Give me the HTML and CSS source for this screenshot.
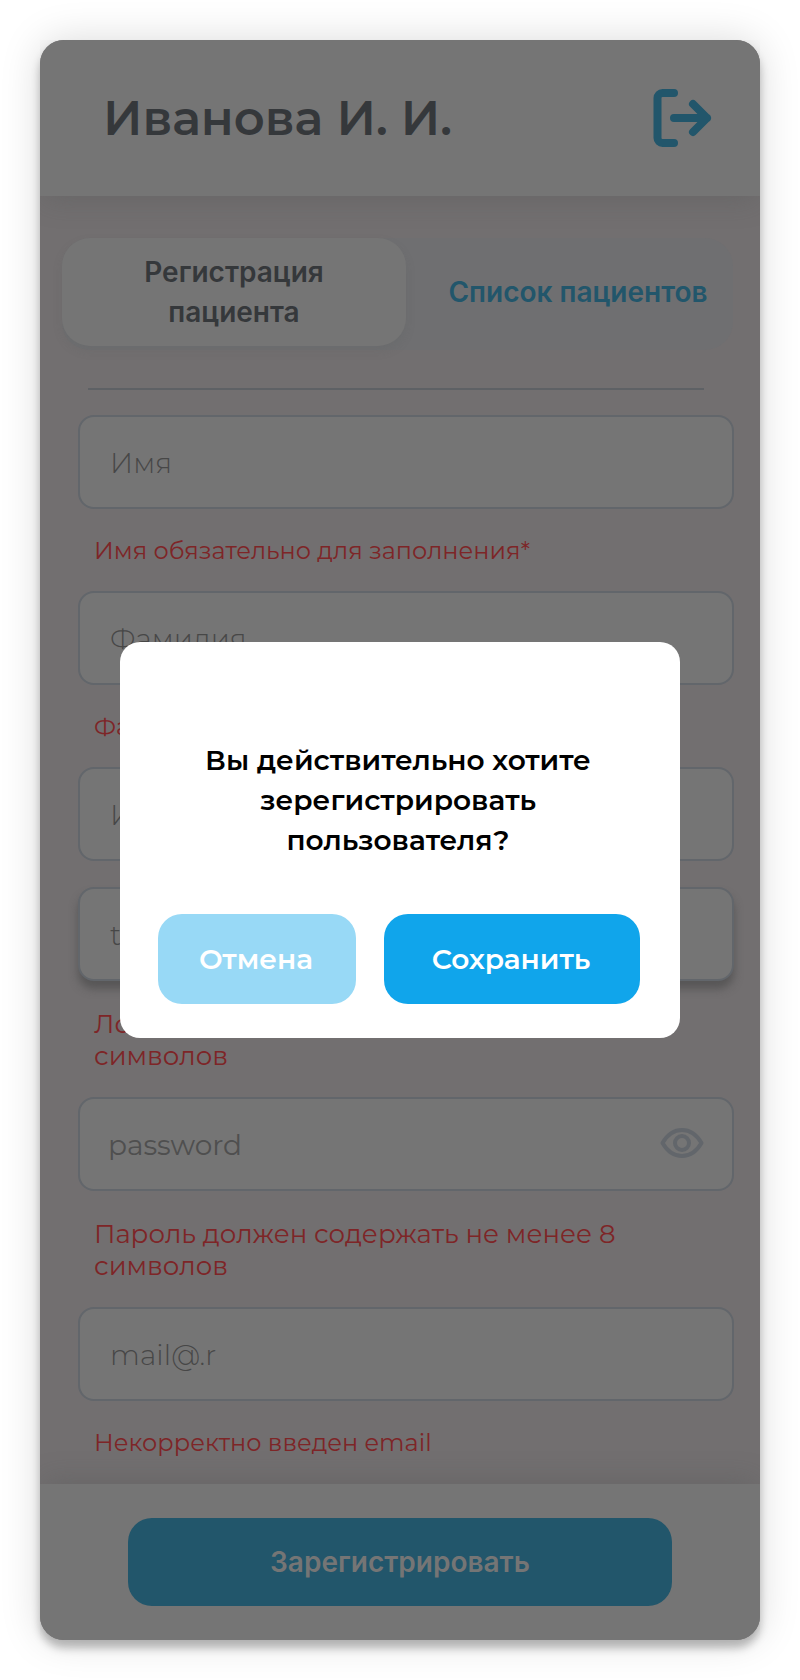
FILE: index.html
```html
<!DOCTYPE html>
<html lang="ru">
<head>
<meta charset="utf-8">
<title>Регистрация пациента</title>
<link rel="stylesheet" href="styles.css">
</head>
<body>
<main class="phone">
  <header class="header">
    <h1 class="header-name">Иванова И. И.</h1>
    <svg class="logout" viewBox="0 0 60 60" fill="none" stroke="currentColor" stroke-width="8" stroke-linecap="round" stroke-linejoin="round">
      <path d="M21 5H9.500a5 5 0 0 0-5 5v40a5 5 0 0 0 5 5H21"/>
      <path d="M21 30H54M40 16L54 30L40 44"/>
    </svg>
  </header>
  <section class="content">
    <nav class="tabs">
      <a class="tab tab-active">Регистрация<br>пациента</a>
      <a class="tab tab-list">Список пациентов</a>
    </nav>
    <hr class="divider">
    <form class="form">
      <div class="field"><span class="ph">Имя</span></div>
      <p class="error">Имя обязательно для заполнения*</p>
      <div class="field"><span class="ph">Фамилия</span></div>
      <p class="error">Фамилия обязательна для заполнения*</p>
      <div class="field"><span class="ph">Иванович</span></div>
      <div class="field field-focus"><span class="ph">test</span></div>
      <p class="error error-long">Логин должен содержать не менее 8<br>символов</p>
      <div class="field field-password"><span class="ph ph-password">password</span>
        <svg class="eye" viewBox="0 0 44 32" fill="none" stroke="currentColor" stroke-width="4" stroke-linejoin="round">
          <path d="M2.500 16C6 10 12.500 3 22 3S38 10 41.500 16C38 22 31.500 29 22 29S6 22 2.500 16Z"/>
          <circle cx="22" cy="16" r="7"/>
        </svg>
      </div>
      <p class="error error-long">Пароль должен содержать не менее 8<br>символов</p>
      <div class="field"><span class="ph">mail@.r</span></div>
      <p class="error">Некорректно введен email</p>
    </form>
  </section>
  <footer class="footer"><button class="submit">Зарегистрировать</button></footer>
  <div class="modal">
    <p class="question">Вы действительно хотите<br>зерегистрировать<br>пользователя?</p>
    <div class="actions">
      <button class="btn btn-cancel">Отмена</button>
      <button class="btn btn-save">Сохранить</button>
    </div>
  </div>
</main>
</body>
</html>
```
FILE: styles.css
```css
* { box-sizing: border-box; }
body { margin: 0; padding: 40px; background: #fff; font-family: Montserrat, Inter, sans-serif; }
h1, p { margin: 0; font-weight: inherit; }
button { border: 0; padding: 0; font-family: inherit; }

.phone { position: relative; width: 720px; height: 1600px; border-radius: 24px; display: flex; flex-direction: column; background: #726f70; box-shadow: 0 8px 8px rgba(0,0,0,.25), 0 0 40px rgba(0,0,0,.15); }

.header { flex: none; z-index: 1; height: 156px; padding: 0 47px 0 63px; display: flex; align-items: center; justify-content: space-between; background: #757575; border-radius: 24px 24px 0 0; box-shadow: 0 8px 28px -4px rgba(80,84,84,.32); clip-path: inset(0 0 -50px 0); }
.header-name { font-size: 48px; line-height: 60px; font-weight: 600; color: #35383b; }
.logout { width: 60px; height: 60px; color: #22566b; }

.content { flex: 1; min-height: 0; overflow: hidden; padding: 42px 26px 0 38px; }
.tabs { display: flex; width: 671px; height: 112px; margin-left: -16px; border-radius: 28px; background: #6f6f71; font-family: Inter, sans-serif; font-size: 28px; line-height: 40px; font-weight: 600; text-align: center; }
.tab { display: flex; align-items: center; justify-content: center; height: 108px; }
.tab-active { width: 344px; border-radius: 28px; background: #757575; color: #35383b; box-shadow: 0 5px 10px rgba(90,92,92,.18); }
.tab-list { flex: 1; padding-left: 17px; color: #22566b; }
.divider { width: 616px; height: 2px; margin: 38px 0 25px 10px; border: 0; background: #5e6165; }

.field { display: flex; align-items: center; justify-content: space-between; height: 94px; padding: 0 28px 0 30px; border: 2px solid #62666b; border-radius: 16px; background: #757575; color: #474747; }
.ph { font-size: 28px; line-height: 36px; font-weight: 300; letter-spacing: .1px; padding-top: 2px; }
.ph-password { font-weight: 400; letter-spacing: 0; color: #4f4f4f; }
.field-focus { margin-top: 26px; box-shadow: 0 8px 8px rgba(70,70,70,.6); }
.field-password { padding-left: 28px; }
.eye { width: 44px; height: 32px; margin-bottom: 2px; color: #62666b; }

.error { height: 82px; padding: 25px 0 0 16px; font-size: 24px; line-height: 34px; font-weight: 400; white-space: nowrap; color: #7e2527; }
.error-long { height: 116px; padding-top: 27px; font-size: 26px; line-height: 32px; }

.footer { flex: none; z-index: 1; height: 156px; display: flex; align-items: center; justify-content: center; border-radius: 0 0 24px 24px; background: #757575; box-shadow: 0 -8px 28px -4px rgba(80,84,84,.32); clip-path: inset(-50px 0 0 0); }
.submit { width: 544px; height: 88px; border-radius: 24px; background: #22566b; color: #757575; font-family: Inter, sans-serif; font-size: 28px; font-weight: 600; }

.modal { position: absolute; z-index: 2; left: 80px; top: 602px; width: 560px; height: 396px; padding: 98px 40px 34px 38px; border-radius: 20px; background: #fff; }
.question { height: 174px; padding-right: 2px; font-size: 28px; line-height: 40px; font-weight: 600; text-align: center; white-space: nowrap; color: #000; }
.actions { display: flex; gap: 28px; }
.btn { height: 90px; padding-right: 2px; border-radius: 24px; color: #fff; font-size: 28px; font-weight: 600; }
.btn-cancel { width: 198px; background: #98d9f6; }
.btn-save { width: 256px; background: #10a5eb; }
```
